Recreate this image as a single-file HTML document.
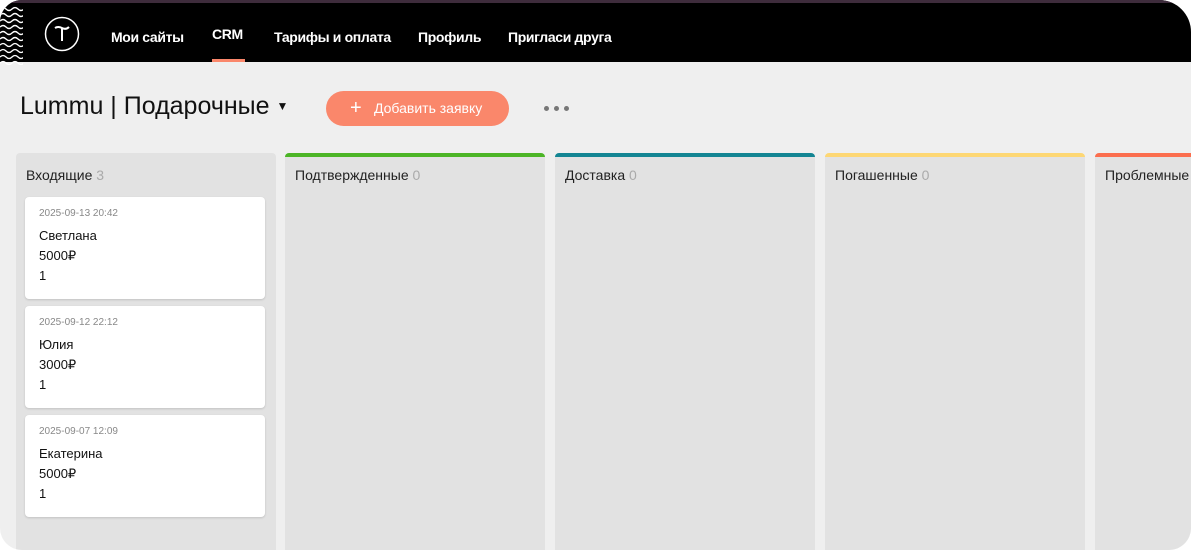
<!DOCTYPE html>
<html><head><meta charset="utf-8"><style>
*{margin:0;padding:0;box-sizing:border-box}
html,body{width:1191px;height:550px;background:#fff;overflow:hidden;font-family:"Liberation Sans","Noto Sans CJK SC",sans-serif}
.frame{position:absolute;left:0;top:0;width:1191px;height:550px;background:#efefef;border-radius:22px 32px 22px 22px;overflow:hidden}
.top{position:absolute;left:0;top:0;width:1191px;height:62px;background:#000;border-top:3px solid #3e2c3c}
.waves{position:absolute;left:0;top:3px;width:23px;height:59px}
.nav{position:absolute;top:26px;color:#fff;font-weight:bold;font-size:14px;letter-spacing:-0.35px}
.ul{position:absolute;left:212px;top:59px;width:33px;height:3px;background:#fa876b}
.title{position:absolute;left:20px;top:92px;font-size:25px;color:#111}
.btn{position:absolute;left:326px;top:91px;width:183px;height:35px;border-radius:18px;background:#fa876b;color:#fff;font-size:14px;line-height:35px;padding-left:48px}
.btn b{position:absolute;left:24px;top:0;font-size:20px;font-weight:normal}
.dot{position:absolute;top:106px;width:5px;height:5px;border-radius:50%;background:#777}
.col{position:absolute;top:153px;width:260px;height:420px;background:#e2e2e2;border-radius:4px}
.col h3{position:absolute;left:10px;top:14px;font-weight:normal;font-size:14px;color:#222}
.col h3 span{color:#aaa}
.card{position:absolute;left:9px;width:240px;height:102px;background:#fff;border-radius:4px;box-shadow:0 1px 2px rgba(0,0,0,.15);padding-left:14px;color:#111}
.card .d{position:absolute;left:14px;top:11px;font-size:10px;color:#888}
.card .n{position:absolute;left:14px;top:31px;font-size:13px}
.card .p{position:absolute;left:14px;top:51px;font-size:13px}
.card .q{position:absolute;left:14px;top:71px;font-size:13px}
</style></head><body>
<div class="frame">
<div class="top">
<svg class="waves" viewBox="0 0 23 59"><g fill="none" stroke="#fff" stroke-width="1.3">
<path d="M0 3 q3 -3 6 0 t6 0 t6 0 t6 0"/><path d="M0 9 q3 -3 6 0 t6 0 t6 0 t6 0"/><path d="M0 15 q3 -3 6 0 t6 0 t6 0 t6 0"/><path d="M0 21 q3 -3 6 0 t6 0 t6 0 t6 0"/><path d="M0 27 q3 -3 6 0 t6 0 t6 0 t6 0"/><path d="M0 33 q3 -3 6 0 t6 0 t6 0 t6 0"/><path d="M0 39 q3 -3 6 0 t6 0 t6 0 t6 0"/><path d="M0 45 q3 -3 6 0 t6 0 t6 0 t6 0"/><path d="M0 51 q3 -3 6 0 t6 0 t6 0 t6 0"/><path d="M0 57 q3 -3 6 0 t6 0 t6 0 t6 0"/></g></svg>
<svg style="position:absolute;left:44px;top:13px" width="36" height="36" viewBox="0 0 36 36"><circle cx="18" cy="18" r="16.5" fill="none" stroke="#fff" stroke-width="1.5"/><path d="M11 12 q3 -2 7 0 t7 -1 M18 12 v13" fill="none" stroke="#fff" stroke-width="2"/></svg>
<div class="nav" style="left:111px">Мои сайты</div>
<div class="nav" style="left:212px;top:23px">CRM</div>
<div class="nav" style="left:274px">Тарифы и оплата</div>
<div class="nav" style="left:418px">Профиль</div>
<div class="nav" style="left:508px">Пригласи друга</div>
</div>
<div class="ul"></div>
<div class="title">Lummu | Подарочные <span style="font-size:12px;position:relative;top:-4px">▼</span></div>
<div class="btn"><b>+</b>Добавить заявку</div>
<div class="dot" style="left:544px"></div><div class="dot" style="left:554px"></div><div class="dot" style="left:564px"></div>
<div class="col" style="left:16px"><h3>Входящие <span>3</span></h3>
<div class="card" style="top:44px"><div class="d">2025-09-13 20:42</div><div class="n">Светлана</div><div class="p">5000₽</div><div class="q">1</div></div>
<div class="card" style="top:153px"><div class="d">2025-09-12 22:12</div><div class="n">Юлия</div><div class="p">3000₽</div><div class="q">1</div></div>
<div class="card" style="top:262px"><div class="d">2025-09-07 12:09</div><div class="n">Екатерина</div><div class="p">5000₽</div><div class="q">1</div></div>
</div>
<div class="col" style="left:285px;border-top:4px solid #4cb526"><h3 style="top:10px">Подтвержденные <span>0</span></h3></div>
<div class="col" style="left:555px;border-top:4px solid #138593"><h3 style="top:10px">Доставка <span>0</span></h3></div>
<div class="col" style="left:825px;border-top:4px solid #fdd774"><h3 style="top:10px">Погашенные <span>0</span></h3></div>
<div class="col" style="left:1095px;border-top:4px solid #fb6e4e"><h3 style="top:10px">Проблемные <span>0</span></h3></div>
</div>
</body></html>
